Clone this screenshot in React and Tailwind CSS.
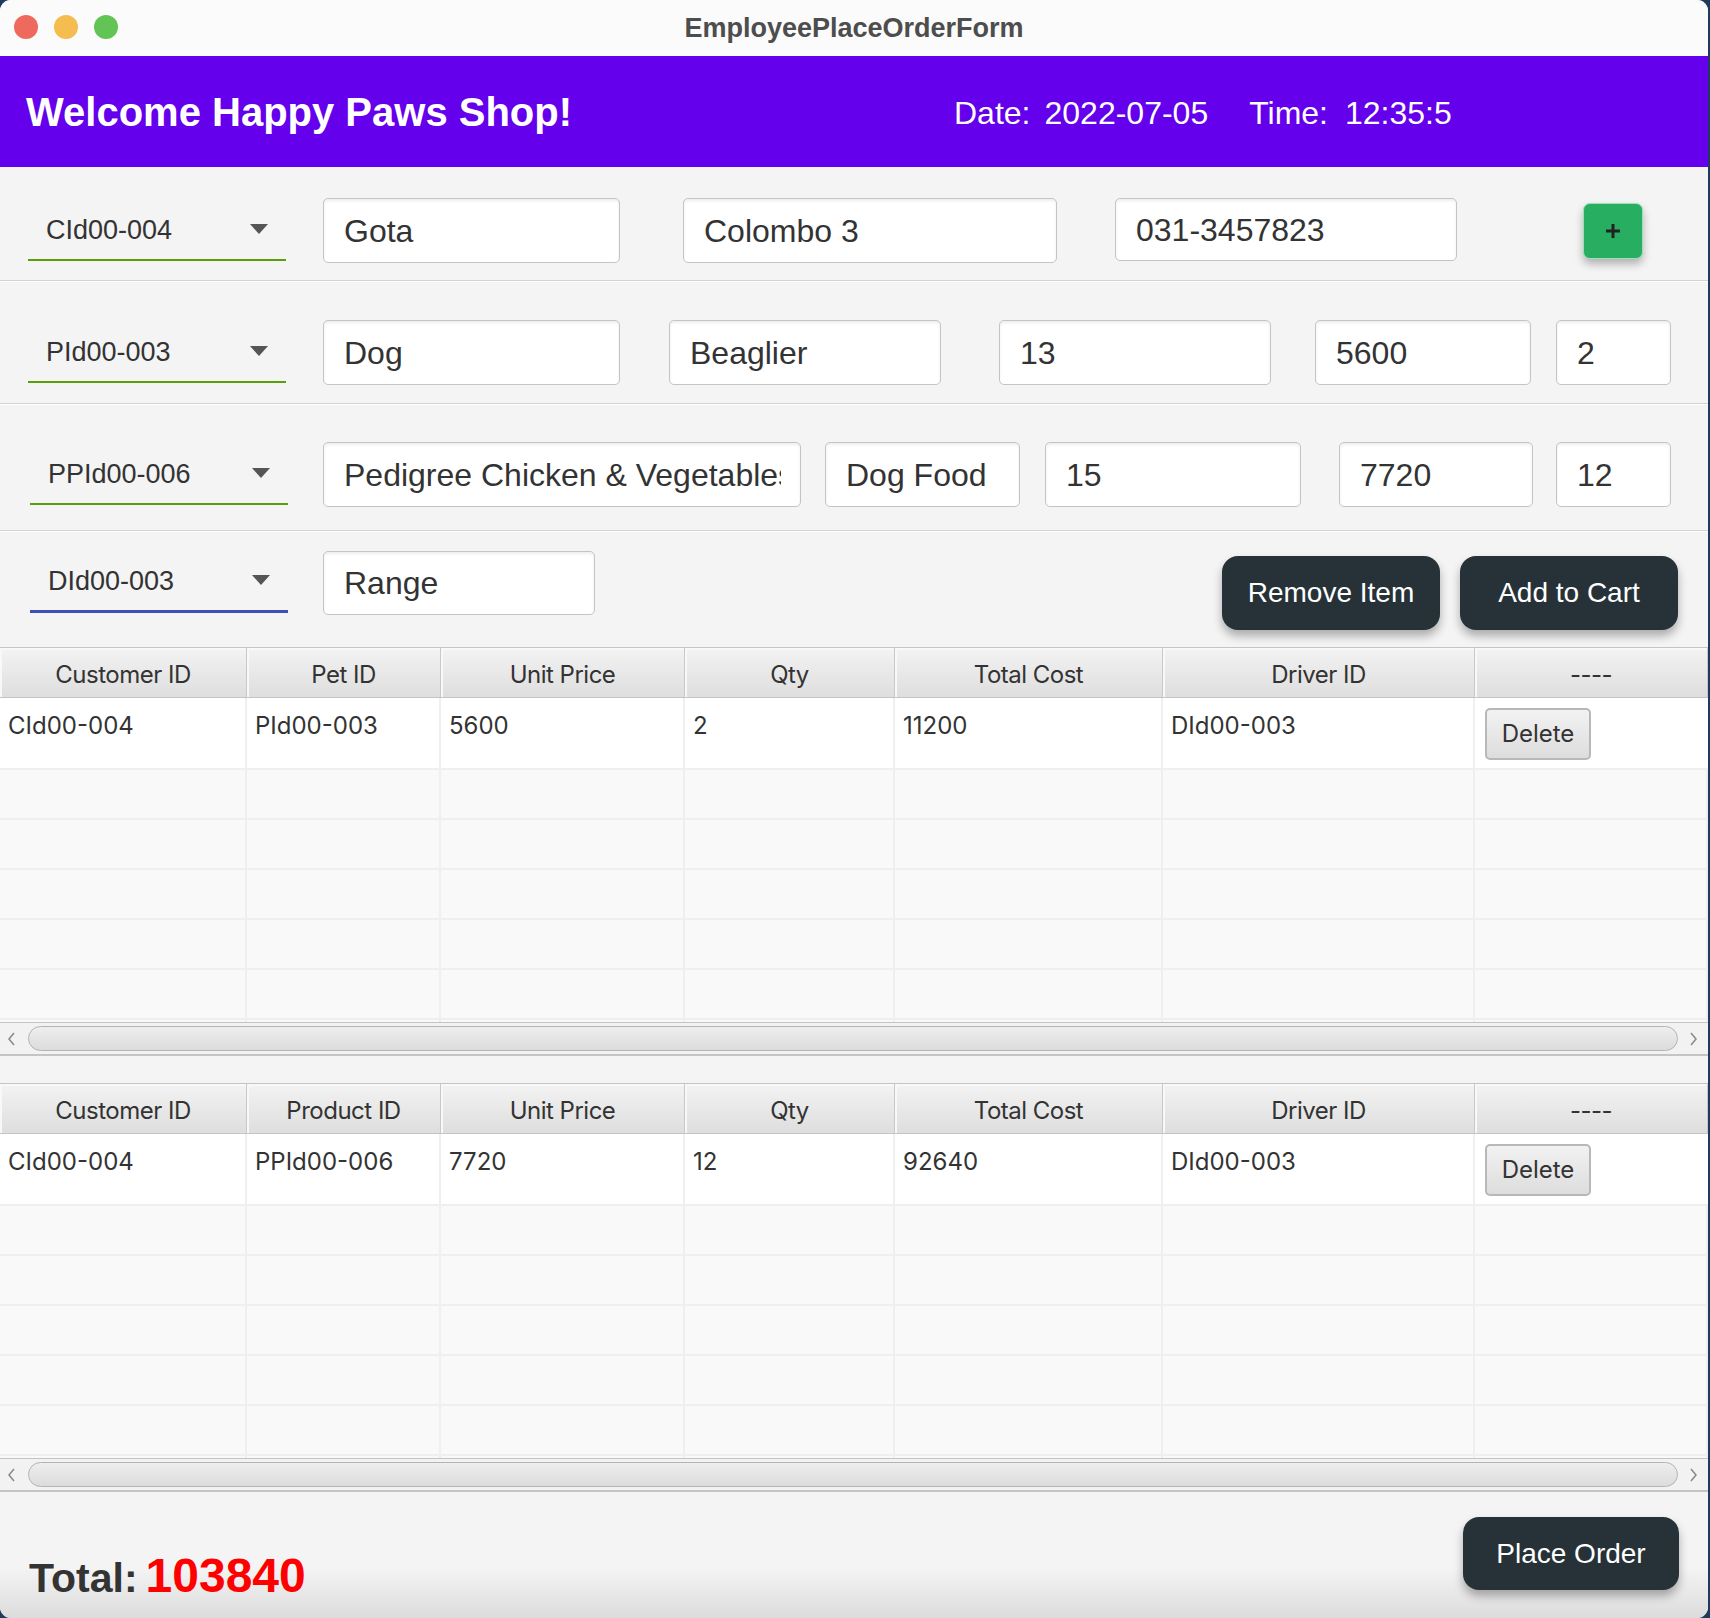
const arial = { fontFamily: '"Liberation Sans", Arial, sans-serif' };
const inter = { fontFamily: 'Inter, "Liberation Sans", sans-serif' };

const colWidths = ['w-[247px]', 'w-[194px]', 'w-[244px]', 'w-[210px]', 'w-[268px]', 'w-[312px]', 'flex-1'];

const ComboBox = ({ value, focused, className }) => (
  <div
    className={`flex items-center justify-between h-[63px] w-[258px] pl-[18px] pr-[18px] ${
      focused ? 'border-b-[3px] border-[#3f51b5]' : 'border-b-2 border-[#5a9e0a]'
    } ${className}`}
  >
    <span className="text-[27px] text-[#333] mt-[3px]" style={arial}>{value}</span>
    <svg width="18" height="10" viewBox="0 0 18 10">
      <polygon points="0,0 18,0 9,10" fill="#555" />
    </svg>
  </div>
);

const Field = ({ value, className }) => (
  <div
    className={`bg-white border border-[#c4c4c4] rounded-[5px] shadow-[inset_0_2px_3px_rgba(0,0,0,0.07)] flex items-center pl-[20px] pr-[19px] ${className}`}
  >
    <div className="overflow-hidden whitespace-nowrap w-full">
      <span className="text-[32px] text-[#333]" style={arial}>{value}</span>
    </div>
  </div>
);

const Separator = () => (
  <div>
    <div className="h-px bg-[#d2d2d2]" />
    <div className="h-px bg-white" />
  </div>
);

const DarkButton = ({ label, className }) => (
  <button
    className={`bg-[#263238] text-white rounded-[16px] text-[28px] shadow-[0_6px_10px_rgba(0,0,0,0.3)] ${className}`}
    style={arial}
  >
    {label}
  </button>
);

const ScrollBar = () => (
  <div className="h-[34px] bg-[#f2f2f2] border-t border-b-2 border-[#c4c4c4] flex items-center">
    <svg width="28" height="20" viewBox="0 0 28 20" className="shrink-0">
      <polyline points="14,4 9,10 14,16" fill="none" stroke="#888" strokeWidth="1.5" />
    </svg>
    <div className="flex-1 h-[25px] rounded-full border border-[#b4b4b4] bg-gradient-to-b from-[#eeeeee] to-[#dcdcdc]" />
    <svg width="30" height="20" viewBox="0 0 30 20" className="shrink-0">
      <polyline points="13,4 18,10 13,16" fill="none" stroke="#888" strokeWidth="1.5" />
    </svg>
  </div>
);

const OrderTable = ({ headers, row }) => (
  <div style={inter}>
    <div className="flex h-[51px] border-t border-b border-[#c4c4c4]">
      {headers.map((h, i) => (
        <div
          key={i}
          className={`${colWidths[i]} shrink-0 flex items-center justify-center pt-[5px] text-[24px] text-[#333] tracking-[-0.5px] bg-gradient-to-b from-[#f3f3f3] to-[#dedede] border-r border-[#c8c8c8] shadow-[inset_2px_2px_0_#f8f8f8]`}
        >
          {h}
        </div>
      ))}
    </div>
    <div className="flex h-[72px] bg-white border-b-2 border-[#efefef]">
      {row.map((c, i) => (
        <div
          key={i}
          className={`${colWidths[i]} shrink-0 border-r-2 border-[#efefef] pl-[8px] pt-[13px] text-[24px] text-[#333] leading-[30px]`}
        >
          {c}
        </div>
      ))}
      <div className="flex-1 pl-[10px] pt-[10px]">
        <button className="w-[106px] h-[52px] rounded-[5px] border-2 border-[#b8b8b8] bg-gradient-to-b from-[#f2f2f2] to-[#dddddd] text-[24px] text-[#333]">
          Delete
        </button>
      </div>
    </div>
    {[0, 1, 2, 3, 4].map((r) => (
      <div key={r} className="flex h-[50px] bg-[#f9f9f9] border-b-2 border-[#efefef]">
        {colWidths.map((w, i) => (
          <div key={i} className={`${w} shrink-0 border-r-2 border-[#efefef]`} />
        ))}
      </div>
    ))}
    <div className="flex h-[2px] bg-[#f9f9f9]">
      {colWidths.map((w, i) => (
        <div key={i} className={`${w} shrink-0 border-r-2 border-[#efefef]`} />
      ))}
    </div>
    <ScrollBar />
  </div>
);

export default function App() {
  return (
    <div className="w-[1710px] h-[1618px] bg-[#1f3b5c] overflow-hidden">
      <div className="w-[1708px] h-[1618px] rounded-[11px] overflow-hidden bg-[#f4f4f4] flex flex-col">
        {/* title bar */}
        <div className="h-[56px] bg-[#fbfbfb] relative flex items-center justify-center shrink-0">
          <div className="absolute left-[14px] top-[15px] flex gap-[16px]">
            <span className="w-[24px] h-[24px] rounded-full bg-[#ee6a5f]" />
            <span className="w-[24px] h-[24px] rounded-full bg-[#f5bd4f]" />
            <span className="w-[24px] h-[24px] rounded-full bg-[#61c454]" />
          </div>
          <span className="text-[27px] font-bold text-[#4d4d4d]" style={arial}>EmployeePlaceOrderForm</span>
        </div>

        {/* header */}
        <div className="h-[111px] bg-[#6400ec] flex items-center pl-[26px] text-white shrink-0" style={arial}>
          <div className="w-[928px] text-[40px] font-bold">Welcome Happy Paws Shop!</div>
          <div className="flex items-center text-[32px] mt-[3px]">
            <span>Date:</span>
            <span className="ml-[14px]">2022-07-05</span>
            <span className="ml-[41px]">Time:</span>
            <span className="ml-[17px]">12:35:5</span>
          </div>
        </div>

        {/* customer row */}
        <div className="h-[113px] flex items-start pt-[31px]">
          <ComboBox value="CId00-004" className="ml-[28px]" />
          <Field value="Gota" className="ml-[37px] w-[297px] h-[65px]" />
          <Field value="Colombo 3" className="ml-[63px] w-[374px] h-[65px]" />
          <Field value="031-3457823" className="ml-[58px] w-[342px] h-[63px]" />
          <button className="ml-[126px] mt-[5px] w-[60px] h-[56px] rounded-[7px] bg-[#27ae60] border border-[#9be0b6] shadow-[0_5px_9px_rgba(0,0,0,0.28)] flex items-center justify-center">
            <svg width="16" height="16" viewBox="0 0 16 16">
              <rect x="6.5" y="1" width="3" height="14" fill="#222" />
              <rect x="1" y="6.5" width="14" height="3" fill="#222" />
            </svg>
          </button>
        </div>
        <Separator />

        {/* pet row */}
        <div className="h-[121px] flex items-start pt-[38px]">
          <ComboBox value="PId00-003" className="ml-[28px]" />
          <Field value="Dog" className="ml-[37px] w-[297px] h-[65px]" />
          <Field value="Beaglier" className="ml-[49px] w-[272px] h-[65px]" />
          <Field value="13" className="ml-[58px] w-[272px] h-[65px]" />
          <Field value="5600" className="ml-[44px] w-[216px] h-[65px]" />
          <Field value="2" className="ml-[25px] w-[115px] h-[65px]" />
        </div>
        <Separator />

        {/* product row */}
        <div className="h-[125px] flex items-start pt-[37px]">
          <ComboBox value="PPId00-006" className="ml-[30px]" />
          <Field value="Pedigree Chicken & Vegetables" className="ml-[35px] w-[478px] h-[65px]" />
          <Field value="Dog Food" className="ml-[24px] w-[195px] h-[65px]" />
          <Field value="15" className="ml-[25px] w-[256px] h-[65px]" />
          <Field value="7720" className="ml-[38px] w-[194px] h-[65px]" />
          <Field value="12" className="ml-[23px] w-[115px] h-[65px]" />
        </div>
        <Separator />

        {/* driver row */}
        <div className="h-[115px] flex items-start">
          <ComboBox value="DId00-003" focused className="ml-[30px] mt-[18px]" />
          <Field value="Range" className="ml-[35px] mt-[19px] w-[272px] h-[64px]" />
          <DarkButton label="Remove Item" className="ml-[627px] mt-[24px] w-[218px] h-[74px]" />
          <DarkButton label="Add to Cart" className="ml-[20px] mt-[24px] w-[218px] h-[74px]" />
        </div>

        <OrderTable
          headers={['Customer ID', 'Pet ID', 'Unit Price', 'Qty', 'Total Cost', 'Driver ID', '----']}
          row={['CId00-004', 'PId00-003', '5600', '2', '11200', 'DId00-003']}
        />

        <div className="h-[27px]" />

        <OrderTable
          headers={['Customer ID', 'Product ID', 'Unit Price', 'Qty', 'Total Cost', 'Driver ID', '----']}
          row={['CId00-004', 'PPId00-006', '7720', '12', '92640', 'DId00-003']}
        />

        {/* footer */}
        <div className="flex-1 bg-gradient-to-b from-[#f4f4f4] from-60% to-[#dcdcdc] flex items-start relative">
          <div className="absolute left-[29px] top-[48px] flex items-baseline font-bold" style={arial}>
            <span className="text-[41px] text-[#333]">Total:</span>
            <span className="ml-[8px] text-[48px] text-[#ff0000]">103840</span>
          </div>
          <DarkButton label="Place Order" className="absolute left-[1463px] top-[25px] w-[216px] h-[73px]" />
        </div>
      </div>
    </div>
  );
}
